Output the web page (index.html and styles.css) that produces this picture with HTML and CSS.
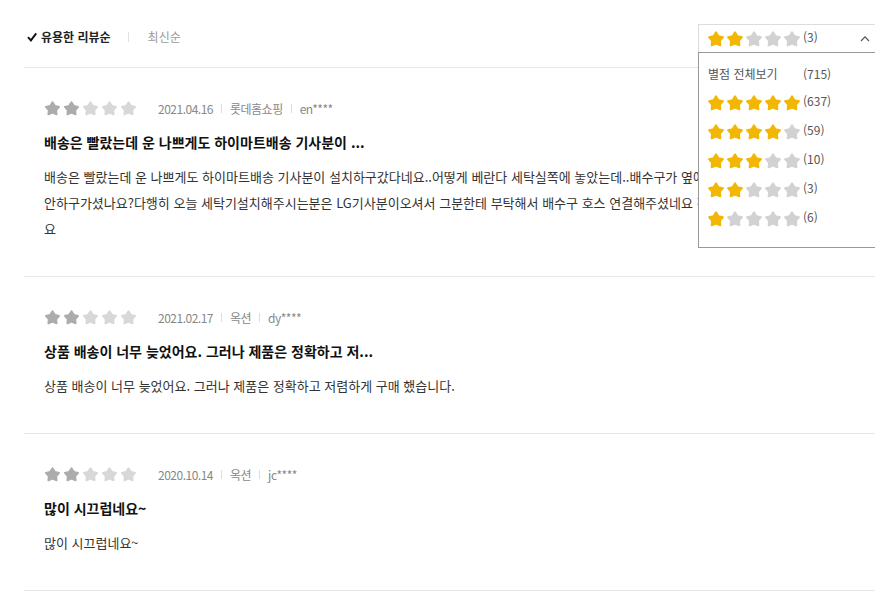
FILE: index.html
```html
<!DOCTYPE html>
<html lang="ko">
<head>
<meta charset="utf-8">
<title>리뷰</title>
<link rel="stylesheet" href="styles.css">
</head>
<body>
<svg class="sprite" xmlns="http://www.w3.org/2000/svg">
  <symbol id="star" viewBox="0 0 24 24">
    <polygon points="12,3 15.3,8.2 21.3,9.6 17.3,14.3 17.8,20.4 12,18 6.2,20.4 6.7,14.3 2.7,9.6 8.7,8.2" fill="currentColor" stroke="currentColor" stroke-width="2.6" stroke-linejoin="round"/>
  </symbol>
</svg>
<div class="page">
  <div class="sortbar">
    <div class="sort-active">
      <svg class="check" viewBox="0 0 10 10"><polyline points="1,5.2 3.9,8.4 9.2,1.4" fill="none" stroke="#111" stroke-width="1.9"/></svg>
      <span>유용한 리뷰순</span>
    </div>
    <span class="sort-sep"></span>
    <span class="sort-item">최신순</span>

    <div class="rating-filter">
      <div class="rf-head">
        <div class="stars stars-lg">
          <svg class="gold"><use href="#star"/></svg><svg class="gold"><use href="#star"/></svg><svg class="grey"><use href="#star"/></svg><svg class="grey"><use href="#star"/></svg><svg class="grey"><use href="#star"/></svg>
        </div>
        <span class="rf-count">(3)</span>
        <svg class="chev" viewBox="0 0 10 7"><polyline points="1,6 5,1.8 9,6" fill="none" stroke="#555" stroke-width="1.2"/></svg>
      </div>
      <ul class="rf-list">
        <li class="rf-item"><span class="rf-label">별점 전체보기</span><span class="rf-count rf-count-text">(715)</span></li>
        <li class="rf-item">
          <div class="stars stars-lg"><svg class="gold"><use href="#star"/></svg><svg class="gold"><use href="#star"/></svg><svg class="gold"><use href="#star"/></svg><svg class="gold"><use href="#star"/></svg><svg class="gold"><use href="#star"/></svg></div>
          <span class="rf-count">(637)</span>
        </li>
        <li class="rf-item">
          <div class="stars stars-lg"><svg class="gold"><use href="#star"/></svg><svg class="gold"><use href="#star"/></svg><svg class="gold"><use href="#star"/></svg><svg class="gold"><use href="#star"/></svg><svg class="grey"><use href="#star"/></svg></div>
          <span class="rf-count">(59)</span>
        </li>
        <li class="rf-item">
          <div class="stars stars-lg"><svg class="gold"><use href="#star"/></svg><svg class="gold"><use href="#star"/></svg><svg class="gold"><use href="#star"/></svg><svg class="grey"><use href="#star"/></svg><svg class="grey"><use href="#star"/></svg></div>
          <span class="rf-count">(10)</span>
        </li>
        <li class="rf-item">
          <div class="stars stars-lg"><svg class="gold"><use href="#star"/></svg><svg class="gold"><use href="#star"/></svg><svg class="grey"><use href="#star"/></svg><svg class="grey"><use href="#star"/></svg><svg class="grey"><use href="#star"/></svg></div>
          <span class="rf-count">(3)</span>
        </li>
        <li class="rf-item">
          <div class="stars stars-lg"><svg class="gold"><use href="#star"/></svg><svg class="grey"><use href="#star"/></svg><svg class="grey"><use href="#star"/></svg><svg class="grey"><use href="#star"/></svg><svg class="grey"><use href="#star"/></svg></div>
          <span class="rf-count">(6)</span>
        </li>
      </ul>
    </div>
  </div>

  <div class="review">
    <div class="meta">
      <div class="stars stars-sm"><svg class="on"><use href="#star"/></svg><svg class="on"><use href="#star"/></svg><svg class="off"><use href="#star"/></svg><svg class="off"><use href="#star"/></svg><svg class="off"><use href="#star"/></svg></div>
      <span class="date">2021.04.16</span><span class="meta-sep"></span><span>롯데홈쇼핑</span><span class="meta-sep"></span><span>en****</span>
    </div>
    <p class="title">배송은 빨랐는데 운 나쁘게도 하이마트배송 기사분이 ...</p>
    <p class="body">배송은 빨랐는데 운 나쁘게도 하이마트배송 기사분이 설치하구갔다네요..어떻게 베란다 세탁실쪽에 놓았는데..배수구가 옆에 있는데 연결을<br>안하구가셨나요?다행히 오늘 세탁기설치해주시는분은 LG기사분이오셔서 그분한테 부탁해서 배수구 호스 연결해주셨네요 정말 감사했어<br>요</p>
  </div>

  <div class="review">
    <div class="meta">
      <div class="stars stars-sm"><svg class="on"><use href="#star"/></svg><svg class="on"><use href="#star"/></svg><svg class="off"><use href="#star"/></svg><svg class="off"><use href="#star"/></svg><svg class="off"><use href="#star"/></svg></div>
      <span class="date">2021.02.17</span><span class="meta-sep"></span><span>옥션</span><span class="meta-sep"></span><span>dy****</span>
    </div>
    <p class="title">상품 배송이 너무 늦었어요. 그러나 제품은 정확하고 저...</p>
    <p class="body">상품 배송이 너무 늦었어요. 그러나 제품은 정확하고 저렴하게 구매 했습니다.</p>
  </div>

  <div class="review">
    <div class="meta">
      <div class="stars stars-sm"><svg class="on"><use href="#star"/></svg><svg class="on"><use href="#star"/></svg><svg class="off"><use href="#star"/></svg><svg class="off"><use href="#star"/></svg><svg class="off"><use href="#star"/></svg></div>
      <span class="date">2020.10.14</span><span class="meta-sep"></span><span>옥션</span><span class="meta-sep"></span><span>jc****</span>
    </div>
    <p class="title">많이 시끄럽네요~</p>
    <p class="body">많이 시끄럽네요~</p>
  </div>
</div>
</body>
</html>
```

FILE: styles.css
```css
html, body {
  margin: 0;
  padding: 0;
  overflow: hidden;
  background: #fff;
}

body {
  font-family: "Noto Sans CJK KR", "Noto Sans", sans-serif;
  color: #333;
}

.sprite {
  position: absolute;
  width: 0;
  height: 0;
  overflow: hidden;
}

.page {
  width: 1100px;
  padding-left: 24px;
}

/* sort bar */
.sortbar {
  position: relative;
  display: flex;
  align-items: center;
  box-sizing: border-box;
  height: 68px;
  padding-top: 7px;
  border-bottom: 1px solid #e8e8e8;
  font-size: 12px;
  line-height: 18px;
}

.sort-active {
  display: flex;
  align-items: center;
  gap: 4px;
  margin-left: 3px;
  font-weight: 700;
  color: #222;
}

.check {
  width: 10px;
  height: 10px;
}

.sort-sep {
  width: 1px;
  height: 10px;
  background: #e2e2e2;
  margin: 0 19px 0 17px;
}

.sort-item {
  color: #999;
}

/* stars */
.stars {
  display: flex;
}

.stars-lg {
  gap: 1px;
  width: 96px;
}

.stars-lg svg {
  width: 18px;
  height: 18px;
}

.stars-sm {
  gap: 2px;
}

.stars-sm svg {
  width: 17px;
  height: 17px;
}

.gold { color: #f2b705; }
.grey { color: #d2d2d2; }
.on { color: #acacac; }
.off { color: #d8d8d8; }

/* rating filter dropdown */
.rating-filter {
  position: absolute;
  top: 24px;
  left: 674px;
  width: 200px;
  background: #fff;
  z-index: 2;
}

.rf-head {
  display: flex;
  align-items: center;
  box-sizing: border-box;
  height: 28px;
  padding-left: 8px;
  border: 1px solid #dcdcdc;
  border-bottom: none;
}

.rf-count {
  padding-bottom: 4px;
  font-size: 12px;
  color: #555;
}

.rf-count-text {
  padding-bottom: 0;
}

.chev {
  width: 10px;
  height: 7px;
  margin-left: auto;
  margin-right: 27px;
}

.rf-list {
  list-style: none;
  margin: 0;
  padding: 6px 0 14px 8px;
  border: 1px solid #999;
  background: #fff;
}

.rf-item {
  display: flex;
  align-items: center;
  height: 29px;
  font-size: 12px;
  color: #555;
}

.rf-label {
  width: 96px;
  padding-left: 1px;
  box-sizing: border-box;
}

/* reviews */
.review {
  padding: 32px 0 34px 20px;
  border-bottom: 1px solid #e8e8e8;
}

.meta {
  display: flex;
  align-items: center;
  height: 17px;
  font-size: 12px;
  letter-spacing: -0.5px;
  color: #888;
}

.date {
  margin-left: 21px;
}

.meta-sep {
  width: 1px;
  height: 9px;
  background: #ddd;
  margin: 0 8px;
}

.title {
  margin: 15px 0 0;
  font-size: 14px;
  font-weight: 700;
  line-height: 20px;
  color: #111;
}

.body {
  margin: 12px 0 0;
  font-size: 13px;
  line-height: 26px;
  color: #333;
}
```
